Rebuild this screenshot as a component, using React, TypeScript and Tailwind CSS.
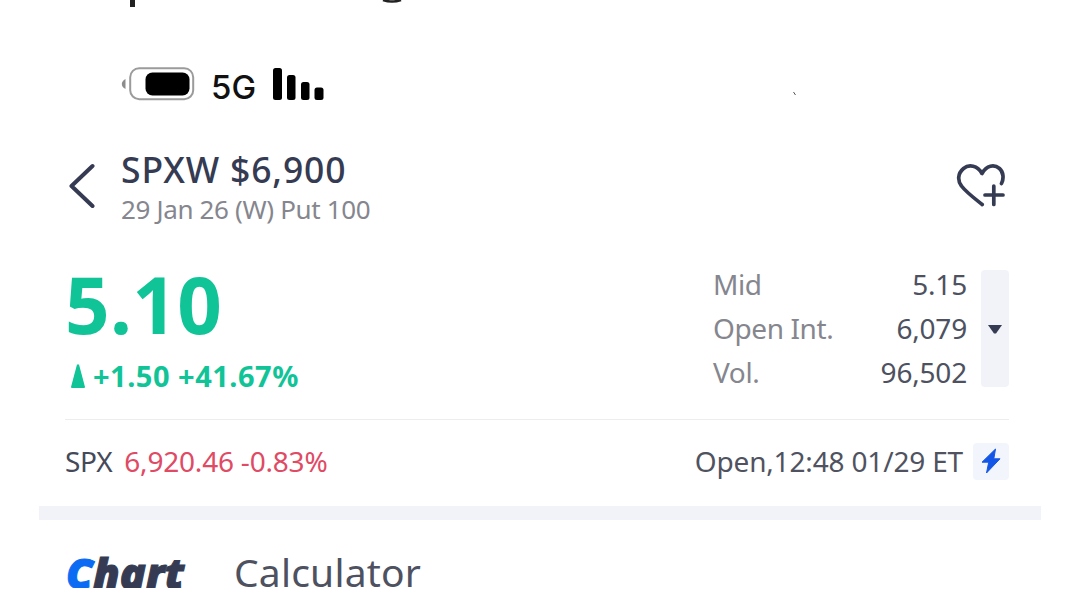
import React from "react";

const stats = [
  { label: "Mid", value: "5.15" },
  { label: "Open Int.", value: "6,079" },
  { label: "Vol.", value: "96,502" },
];

function StatusBar() {
  return (
    <div className="flex h-[50px] items-center pl-[121px]">
      <svg width="74" height="34" viewBox="0 0 74 34" fill="none">
        <path d="M4.5 12v10C2.2 21 .8 19 .8 17s1.400-4 3.700-5Z" fill="#8c8c8c" />
        <rect x="9.200" y="1.200" width="63" height="31" rx="9" stroke="#9b9b9b" strokeWidth="2" />
        <rect x="24.500" y="5.500" width="44" height="23" rx="7" fill="#000" />
      </svg>
      <span className="ml-[16px] w-[44px] pt-[5px] font-['Inter',sans-serif] text-[33px] font-medium leading-[50px] text-[#111]">
        5G
      </span>
      <svg className="ml-[17px]" width="54" height="34" viewBox="0 0 54 34" fill="#000">
        <rect x="1" y="1" width="9" height="32" rx="2.500" />
        <rect x="15" y="8" width="8.500" height="25" rx="2.500" />
        <rect x="29" y="15" width="8.500" height="18" rx="2.500" />
        <rect x="42.500" y="20.500" width="9" height="12.500" rx="2.500" />
      </svg>
      <svg className="ml-[466px] mt-[20px]" width="6" height="6" viewBox="0 0 6 6">
        <path d="M1.500 1l2 3" stroke="#555" strokeWidth="1" />
      </svg>
    </div>
  );
}

function ContractHeader() {
  return (
    <header className="mt-[38px] flex h-[82px] items-start pl-[68px] pr-[73px]">
      <svg className="mt-[16px] shrink-0" width="27" height="46" viewBox="0 0 27 46" fill="none">
        <path
          d="M24.500 3 3.500 23 24.500 43"
          stroke="#353b52"
          strokeWidth="4"
          strokeLinecap="round"
          strokeLinejoin="round"
        />
      </svg>
      <div className="ml-[26px] flex-1">
        <h1 className="text-[35.5px] font-medium leading-[44px] tracking-[0.85px] text-[#353b52]">SPXW $6,900</h1>
        <p className="text-[26px] leading-[36px] tracking-[-0.35px] text-[#85868e]">29 Jan 26 (W) Put 100</p>
      </div>
      <svg className="mt-[14px] shrink-0" width="52" height="46" viewBox="0 0 52 46" fill="none">
        <path
          d="M46.500 22.500C49 17.500 48.500 11 44.500 7.500 39 3 31.500 4.500 27 12.500 22.500 4.500 14 3 8.500 7.500 2.500 12.500 2.500 20 6.500 25 11 31 19 37 27.200 43.500M38.800 25v18.500M30 34h18"
          stroke="#353b52"
          strokeWidth="3.700"
          strokeLinecap="round"
          strokeLinejoin="round"
        />
      </svg>
    </header>
  );
}

function Quote() {
  return (
    <section className="mt-[33px] flex h-[157px] items-start pl-[65px] pr-[71px]">
      <div className="flex-1 pt-[9px] text-[#10c497]">
        <div className="h-[86px] text-[78px] font-bold leading-[66px] tracking-[0.4px]">5.10</div>
        <div className="flex items-center">
          <svg className="ml-[5px]" width="16" height="26" viewBox="0 0 16 26">
            <path d="M7 1.500h2L15 24q0 1-1 1H2q-1 0-1-1Z" fill="#10c497" />
          </svg>
          <span className="ml-[7px] text-[29px] font-bold leading-[38px] tracking-[0.5px]">+1.50 +41.67%</span>
        </div>
      </div>
      <dl className="w-[254px] text-[28px] leading-[44px]">
        {stats.map((s) => (
          <div key={s.label} className="flex h-[44px] justify-between">
            <dt className="tracking-[-0.4px] text-[#85868e]">{s.label}</dt>
            <dd className="tracking-[-0.2px] text-[#4d5160]">{s.value}</dd>
          </div>
        ))}
      </dl>
      <button className="ml-[14px] mt-[8px] flex h-[117px] w-[28px] items-center justify-center rounded-[4px] bg-[#f2f3f9]">
        <svg width="16" height="10" viewBox="0 0 16 10">
          <path d="M1 1h14L9 9.500H7Z" fill="#353b52" />
        </svg>
      </button>
    </section>
  );
}

function Underlying() {
  return (
    <section className="ml-[65px] mr-[71px] flex h-[87px] items-center border-t border-[#ededf0] pb-[4px] text-[28px]">
      <span className="tracking-[-0.3px] text-[#454a5a]">SPX</span>
      <span className="ml-[12px] tracking-[-0.2px] text-[#df4a65]">6,920.46 -0.83%</span>
      <span className="ml-auto tracking-[-0.17px] text-[#50535f]">Open,12:48 01/29 ET</span>
      <span className="ml-[10px] flex h-[37px] w-[36px] items-center justify-center rounded-[4px] bg-[#f2f5fb]">
        <svg width="20" height="26" viewBox="0 0 20 26">
          <path
            d="M14.500 1 1 14.200h6.700L5.500 25 19 10.800h-6.200Z"
            fill="#1457e6"
            stroke="#1457e6"
            strokeLinejoin="round"
          />
        </svg>
      </span>
    </section>
  );
}

function Tabs() {
  return (
    <nav className="flex h-[68px] overflow-hidden pl-[66px]">
      <span className="w-[118px] pt-[20px] text-[43px] font-black italic leading-[66px] text-[#353b52] [-webkit-text-stroke:1px]">
        <span className="text-[#0b6cf3]">C</span>hart
      </span>
      <span className="ml-[50px] pt-[19px] text-[39px] leading-[66px] tracking-[0.2px] text-[#4d5160]">
        Calculator
      </span>
    </nav>
  );
}

export default function App() {
  return (
    <main className="h-[608px] w-[1080px] overflow-hidden whitespace-nowrap bg-white font-['Noto_Sans',sans-serif]">
      <svg className="block" width="1080" height="8" viewBox="0 0 1080 8">
        <path d="M130 0h5v7h-5Z" fill="#222" />
        <path d="M383 0q9 3 18 0" fill="none" stroke="#222" strokeWidth="2.500" />
      </svg>
      <div className="mt-[51px]">
        <StatusBar />
      </div>
      <ContractHeader />
      <Quote />
      <Underlying />
      <div className="mx-[39px] h-[14px] bg-[#f2f3f9]" />
      <Tabs />
    </main>
  );
}
